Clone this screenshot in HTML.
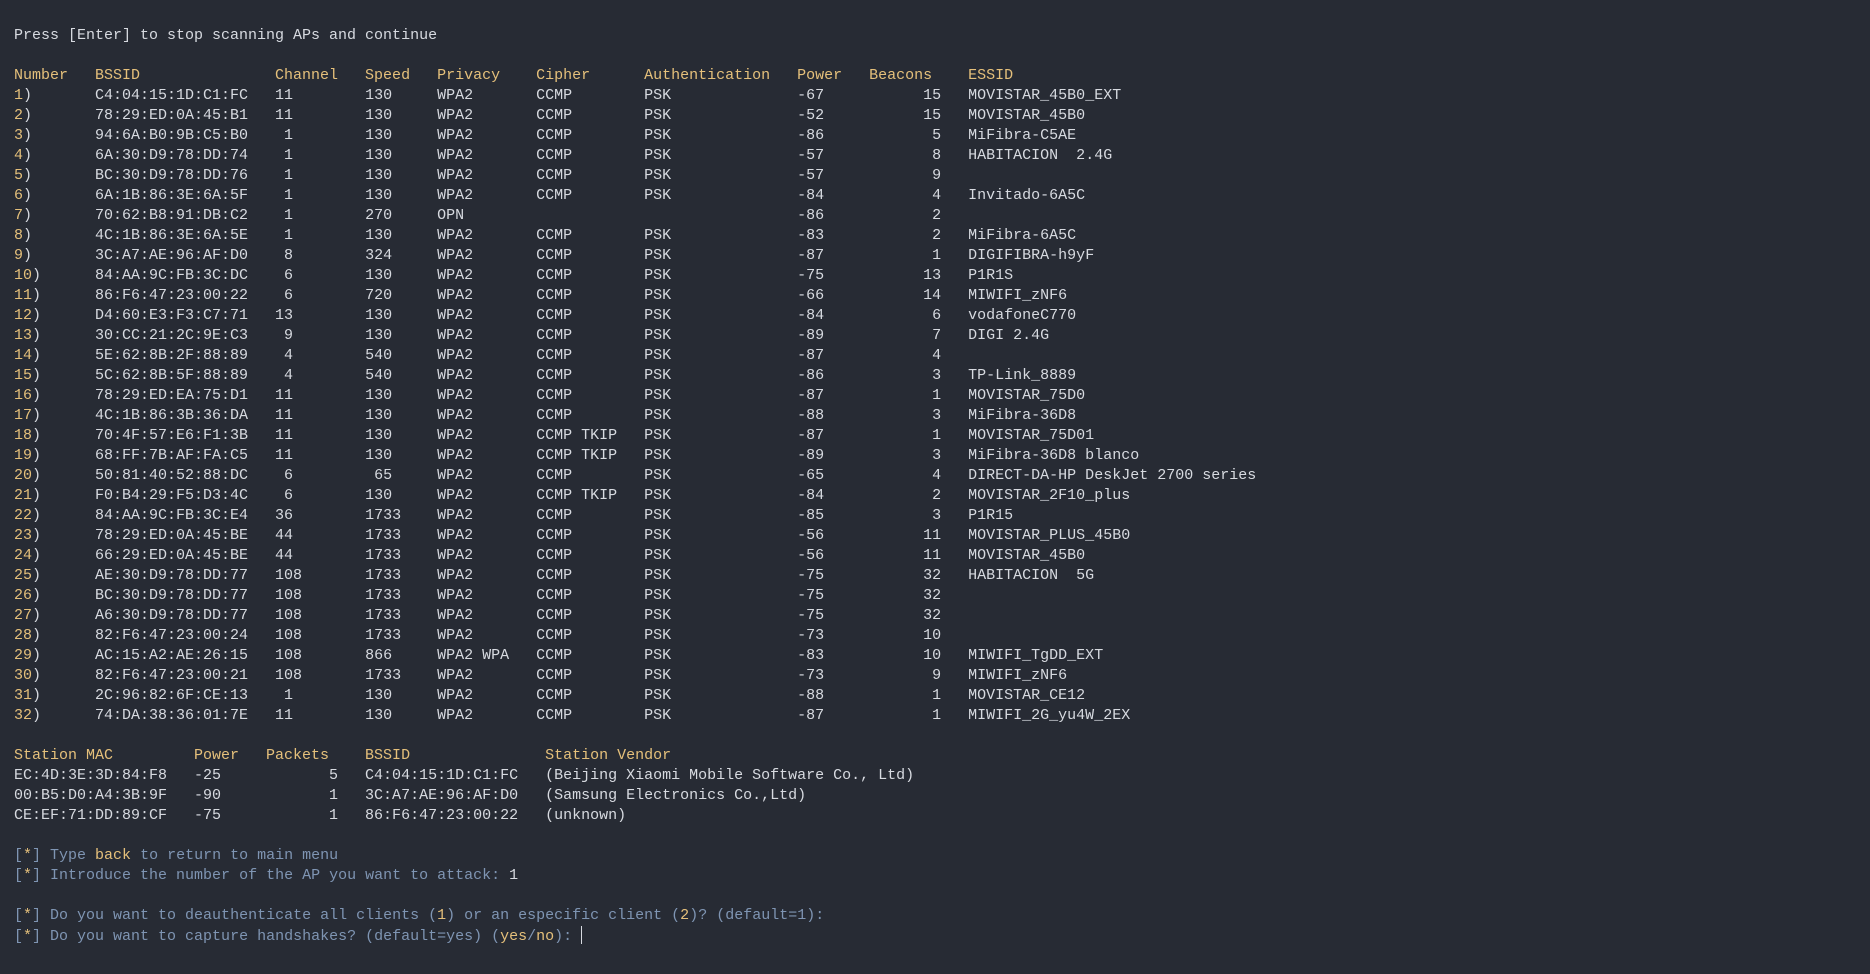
<!DOCTYPE html>
<html><head><meta charset="utf-8"><style>
html,body{margin:0;padding:0;background:#272b34;width:1870px;height:974px;overflow:hidden}
pre{margin:0;padding:26px 0 0 14px;font-family:"Liberation Mono",monospace;font-size:15px;line-height:20px;color:#d7dae0;white-space:pre}
.y{color:#e5c07b}
.b{color:#7f95b3}
.cur{display:inline-block;width:1px;height:18px;background:#d7dae0;vertical-align:-4px}
</style></head><body><pre>Press [Enter] to stop scanning APs and continue

<span class="y">Number   BSSID               Channel   Speed   Privacy    Cipher      Authentication   Power   Beacons    ESSID</span>
<span class="y">1</span>)       C4:04:15:1D:C1:FC   11        130     WPA2       CCMP        PSK              -67           15   MOVISTAR_45B0_EXT
<span class="y">2</span>)       78:29:ED:0A:45:B1   11        130     WPA2       CCMP        PSK              -52           15   MOVISTAR_45B0
<span class="y">3</span>)       94:6A:B0:9B:C5:B0    1        130     WPA2       CCMP        PSK              -86            5   MiFibra-C5AE
<span class="y">4</span>)       6A:30:D9:78:DD:74    1        130     WPA2       CCMP        PSK              -57            8   HABITACION  2.4G
<span class="y">5</span>)       BC:30:D9:78:DD:76    1        130     WPA2       CCMP        PSK              -57            9
<span class="y">6</span>)       6A:1B:86:3E:6A:5F    1        130     WPA2       CCMP        PSK              -84            4   Invitado-6A5C
<span class="y">7</span>)       70:62:B8:91:DB:C2    1        270     OPN                                     -86            2
<span class="y">8</span>)       4C:1B:86:3E:6A:5E    1        130     WPA2       CCMP        PSK              -83            2   MiFibra-6A5C
<span class="y">9</span>)       3C:A7:AE:96:AF:D0    8        324     WPA2       CCMP        PSK              -87            1   DIGIFIBRA-h9yF
<span class="y">10</span>)      84:AA:9C:FB:3C:DC    6        130     WPA2       CCMP        PSK              -75           13   P1R1S
<span class="y">11</span>)      86:F6:47:23:00:22    6        720     WPA2       CCMP        PSK              -66           14   MIWIFI_zNF6
<span class="y">12</span>)      D4:60:E3:F3:C7:71   13        130     WPA2       CCMP        PSK              -84            6   vodafoneC770
<span class="y">13</span>)      30:CC:21:2C:9E:C3    9        130     WPA2       CCMP        PSK              -89            7   DIGI 2.4G
<span class="y">14</span>)      5E:62:8B:2F:88:89    4        540     WPA2       CCMP        PSK              -87            4
<span class="y">15</span>)      5C:62:8B:5F:88:89    4        540     WPA2       CCMP        PSK              -86            3   TP-Link_8889
<span class="y">16</span>)      78:29:ED:EA:75:D1   11        130     WPA2       CCMP        PSK              -87            1   MOVISTAR_75D0
<span class="y">17</span>)      4C:1B:86:3B:36:DA   11        130     WPA2       CCMP        PSK              -88            3   MiFibra-36D8
<span class="y">18</span>)      70:4F:57:E6:F1:3B   11        130     WPA2       CCMP TKIP   PSK              -87            1   MOVISTAR_75D01
<span class="y">19</span>)      68:FF:7B:AF:FA:C5   11        130     WPA2       CCMP TKIP   PSK              -89            3   MiFibra-36D8 blanco
<span class="y">20</span>)      50:81:40:52:88:DC    6         65     WPA2       CCMP        PSK              -65            4   DIRECT-DA-HP DeskJet 2700 series
<span class="y">21</span>)      F0:B4:29:F5:D3:4C    6        130     WPA2       CCMP TKIP   PSK              -84            2   MOVISTAR_2F10_plus
<span class="y">22</span>)      84:AA:9C:FB:3C:E4   36        1733    WPA2       CCMP        PSK              -85            3   P1R15
<span class="y">23</span>)      78:29:ED:0A:45:BE   44        1733    WPA2       CCMP        PSK              -56           11   MOVISTAR_PLUS_45B0
<span class="y">24</span>)      66:29:ED:0A:45:BE   44        1733    WPA2       CCMP        PSK              -56           11   MOVISTAR_45B0
<span class="y">25</span>)      AE:30:D9:78:DD:77   108       1733    WPA2       CCMP        PSK              -75           32   HABITACION  5G
<span class="y">26</span>)      BC:30:D9:78:DD:77   108       1733    WPA2       CCMP        PSK              -75           32
<span class="y">27</span>)      A6:30:D9:78:DD:77   108       1733    WPA2       CCMP        PSK              -75           32
<span class="y">28</span>)      82:F6:47:23:00:24   108       1733    WPA2       CCMP        PSK              -73           10
<span class="y">29</span>)      AC:15:A2:AE:26:15   108       866     WPA2 WPA   CCMP        PSK              -83           10   MIWIFI_TgDD_EXT
<span class="y">30</span>)      82:F6:47:23:00:21   108       1733    WPA2       CCMP        PSK              -73            9   MIWIFI_zNF6
<span class="y">31</span>)      2C:96:82:6F:CE:13    1        130     WPA2       CCMP        PSK              -88            1   MOVISTAR_CE12
<span class="y">32</span>)      74:DA:38:36:01:7E   11        130     WPA2       CCMP        PSK              -87            1   MIWIFI_2G_yu4W_2EX

<span class="y">Station MAC         Power   Packets    BSSID               Station Vendor</span>
EC:4D:3E:3D:84:F8   -25            5   C4:04:15:1D:C1:FC   (Beijing Xiaomi Mobile Software Co., Ltd)
00:B5:D0:A4:3B:9F   -90            1   3C:A7:AE:96:AF:D0   (Samsung Electronics Co.,Ltd)
CE:EF:71:DD:89:CF   -75            1   86:F6:47:23:00:22   (unknown)

<span class="b">[<span class="y">*</span>] Type <span class="y">back</span> to return to main menu</span>
<span class="b">[<span class="y">*</span>] Introduce the number of the AP you want to attack: </span>1

<span class="b">[<span class="y">*</span>] Do you want to deauthenticate all clients (<span class="y">1</span>) or an especific client (<span class="y">2</span>)? (default=1):</span>
<span class="b">[<span class="y">*</span>] Do you want to capture handshakes? (default=yes) (<span class="y">yes</span>/<span class="y">no</span>): </span><span class="cur"></span></pre></body></html>
